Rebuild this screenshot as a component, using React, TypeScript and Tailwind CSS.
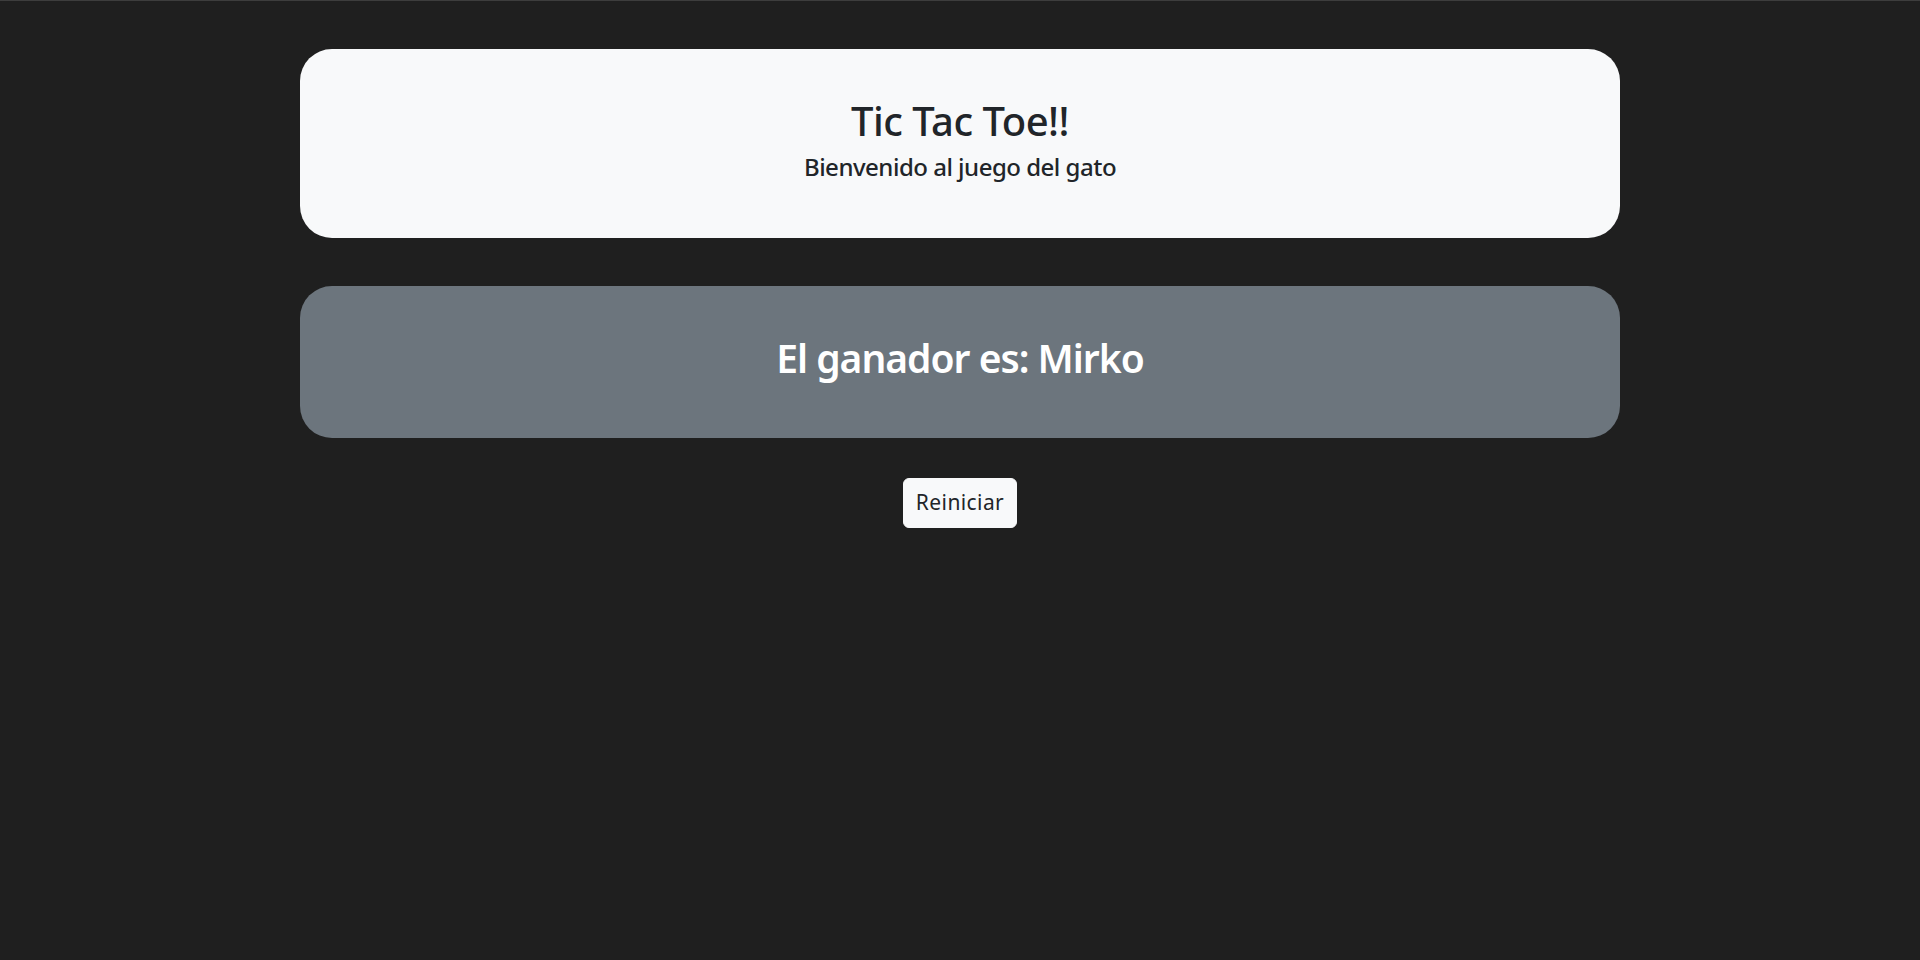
export default function App() {
  return (
    <div
      className="min-h-screen bg-[#1f1f1f] border-t border-[#3d3d3d] pt-12"
      style={{ fontFamily: '"Noto Sans", "Open Sans", sans-serif' }}
    >
      <div className="w-[1320px] mx-auto flex flex-col items-center">
        <div className="w-full rounded-[32px] bg-[#f8f9fa] p-12 text-center text-[#212529]">
          <h1 className="text-[40px] leading-[1.2] font-medium tracking-[-0.5px] mb-2">Tic Tac Toe!!</h1>
          <h4 className="text-[24px] leading-[1.2] font-medium tracking-[-0.5px] mb-2">Bienvenido al juego del gato</h4>
        </div>

        <div className="w-full mt-12 rounded-[32px] bg-[#6c757d] p-12 text-center text-white">
          <h1 className="text-[39px] leading-[48px] font-semibold tracking-[-1px] mb-2">El ganador es: Mirko</h1>
        </div>

        <button className="mt-10 h-[50px] w-[114px] rounded-md bg-[#f8f9fa] text-[#212529] text-[21px] tracking-[0.4px] leading-[1.5] border border-[#f8f9fa]">
          Reiniciar
        </button>
      </div>
    </div>
  );
}
